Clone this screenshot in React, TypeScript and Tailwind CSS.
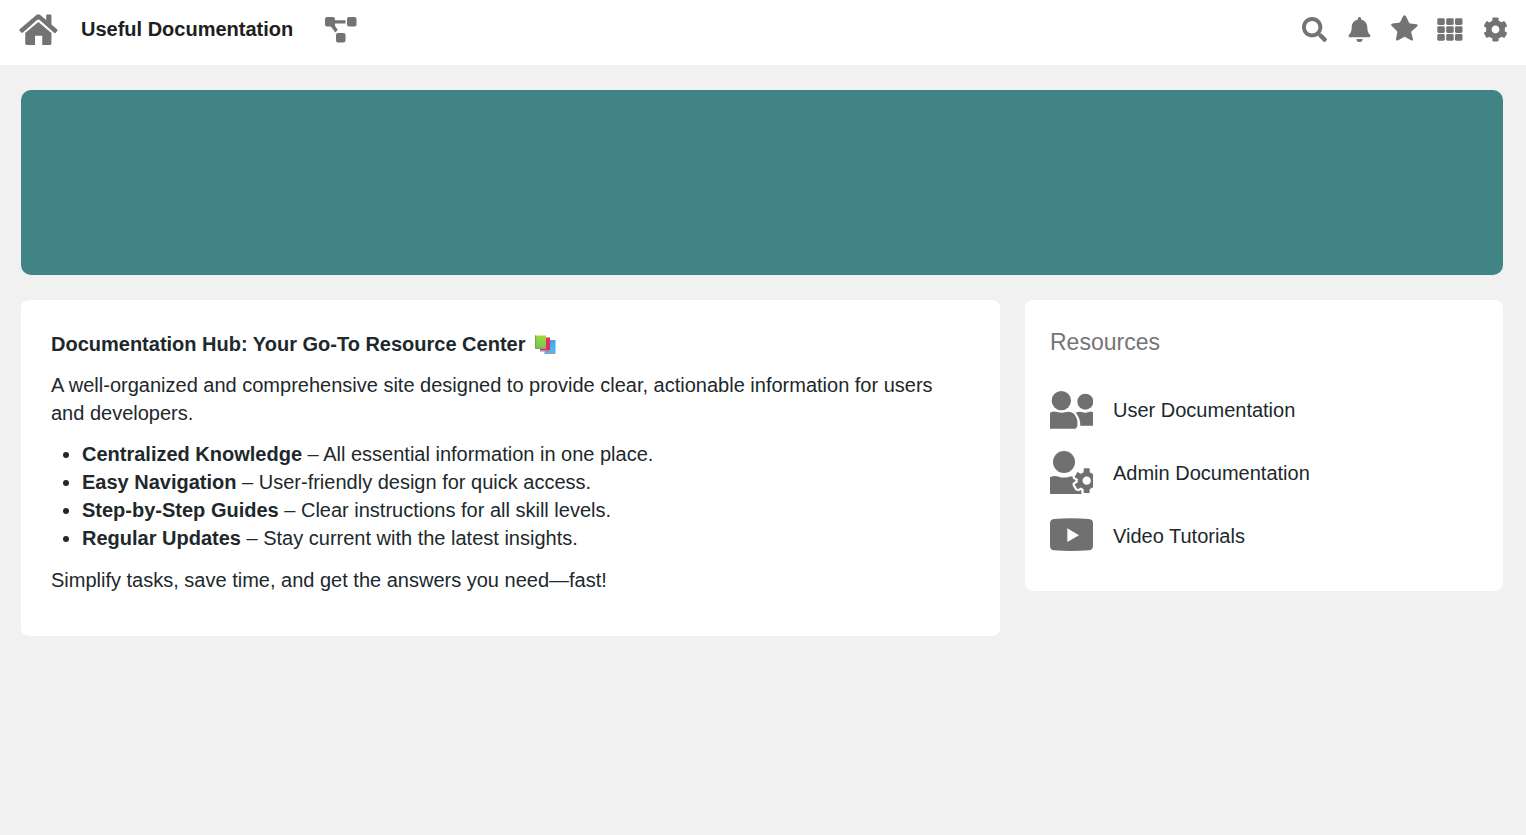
import type { ReactNode } from 'react';
import { FaBell, FaCog, FaSearch } from 'react-icons/fa';

function HomeIcon() {
  return (
    <svg viewBox="26 27 119 94" className="h-[31px] w-[39px]" fill="currentColor" aria-hidden="true">
      <path d="M45 85 85 51l40 34v32q0 4-4 4H97V93H75v28H49q-4 0-4-4Z" />
      <path d="m28 73 51-43q6-5 12 0l18 15V31q0-3 3-3h10q3 0 3 3v28l17 14q3 3 1 5l-5 6q-2 2-5 0L89 45q-4-3-8 0L38 83q-3 3-5 0l-5-5q-2-3 0-5Z" />
    </svg>
  );
}

function DiagramIcon() {
  return (
    <svg viewBox="0 0 32 26" className="h-[26px] w-8" fill="currentColor" aria-hidden="true">
      <rect x="0" y="0" width="10" height="9.5" rx="2" />
      <rect x="22" y="0" width="9.5" height="9.5" rx="2" />
      <rect x="11" y="16" width="9.5" height="9.5" rx="2" />
      <path d="M9 3.3h11.5v3.2H9zM5.5 9l3.5-2 3.7 6-2.4 2.4Z" />
    </svg>
  );
}

function StarIcon() {
  return (
    <svg viewBox="20 17 81 77" className="h-[26px] w-[27px]" fill="currentColor" aria-hidden="true">
      <path d="M56 20q4-5 9 0l9 19q1 3 4 3l19 2q5 2 2 6L82 65q-2 2-1 5l5 19q0 5-5 4L64 83q-3-2-6 0L40 93q-6 1-5-5l4-19q0-3-2-5L21 48q-2-4 3-6l19-2q3 0 5-3Z" />
    </svg>
  );
}

function GridIcon() {
  return (
    <svg viewBox="0 0 26 23" className="h-[23px] w-[26px]" fill="currentColor" aria-hidden="true">
      {[0.3, 8.2, 16].map((y) =>
        [0.3, 9.2, 18].map((x) => <rect key={`${x}-${y}`} x={x} y={y} width="7.5" height="6.7" rx="1.4" />),
      )}
    </svg>
  );
}

function BooksIcon() {
  return (
    <svg viewBox="0 0 21 20" className="ml-1 inline-block h-5 w-[21px] align-[-4px]" aria-hidden="true">
      <defs>
        <linearGradient id="book-green" x1="0" y1="0" x2="0" y2="1">
          <stop offset="0" stopColor="#a5d83c" />
          <stop offset="1" stopColor="#6cc558" />
        </linearGradient>
        <linearGradient id="book-blue" x1="0" y1="0" x2="0" y2="1">
          <stop offset="0" stopColor="#4a9ee8" />
          <stop offset="1" stopColor="#45c4f5" />
        </linearGradient>
      </defs>
      <path d="M11 5h9.5v12.5l-.8 1.5H9.5Z" fill="url(#book-blue)" />
      <path d="M9.5 17.4h11v.6l-.8 1H9.5Z" fill="#8f9dc4" />
      <path d="M5 2.5h10V15l-.8 1.2H5Z" fill="#e02e58" />
      <path d="M5 15h9.8l-.8 1.2H5Z" fill="#b987a4" />
      <path d="M0 .5h11v12l-1 1.5H0Z" fill="url(#book-green)" />
      <path d="M0 12.7h10.8l-.8 1.3H1L0 13Z" fill="#8b9c91" />
      <path d="M0 .5h1.2V13L0 12.5Z" fill="#72ac45" />
    </svg>
  );
}

function UsersIcon() {
  return (
    <svg viewBox="0 0 129 129" className="size-[43px] shrink-0" fill="currentColor" aria-hidden="true">
      <circle cx="34" cy="38" r="29" />
      <circle cx="106" cy="41" r="24" />
      <path d="M0 74q12-6 21-2 13 5 27 0 24-5 32 19 3 9 2 22-1 7-7 9H0Z" />
      <path d="M77 74q11-5 18-2 10 4 21 0 6-3 13 1v40H91q0-24-14-39Z" />
    </svg>
  );
}

function GearShape() {
  return (
    <>
      <circle cx="110" cy="89" r="27" />
      <rect x="101" y="52" width="18" height="74" rx="2" />
      <rect x="101" y="52" width="18" height="74" rx="2" transform="rotate(60 110 89)" />
      <rect x="101" y="52" width="18" height="74" rx="2" transform="rotate(120 110 89)" />
    </>
  );
}

function AdminIcon() {
  return (
    <svg viewBox="0 0 129 129" className="size-[43px] shrink-0" fill="currentColor" aria-hidden="true">
      <circle cx="42" cy="33" r="33" />
      <path d="M0 79q13-7 26-2 15 5 32 0 14-4 24 4l13 22v26H0Z" />
      <g fill="#fff" stroke="#fff" strokeWidth="13">
        <GearShape />
      </g>
      <path d="M74 118q12 0 19 11H74Z" />
      <GearShape />
      <circle cx="110" cy="89" r="12.5" fill="#fff" />
    </svg>
  );
}

function VideoIcon() {
  return (
    <svg viewBox="0 0 129 129" className="size-[43px] shrink-0" fill="currentColor" aria-hidden="true">
      <path
        fillRule="evenodd"
        d="M12 15q52-5 105 0 12 1 12 13v67q0 12-12 14-52 4-105 0-12-2-12-14V28q0-12 12-13Zm40 28v41l35-20.5Z"
      />
    </svg>
  );
}

const features = [
  { name: 'Centralized Knowledge', text: 'All essential information in one place.' },
  { name: 'Easy Navigation', text: 'User-friendly design for quick access.' },
  { name: 'Step-by-Step Guides', text: 'Clear instructions for all skill levels.' },
  { name: 'Regular Updates', text: 'Stay current with the latest insights.' },
];

const resources: { name: string; icon: ReactNode }[] = [
  { name: 'User Documentation', icon: <UsersIcon /> },
  { name: 'Admin Documentation', icon: <AdminIcon /> },
  { name: 'Video Tutorials', icon: <VideoIcon /> },
];

export default function App() {
  return (
    <div className="min-h-screen bg-[#f1f1f1] font-['Liberation_Sans',Arial,sans-serif] text-xl leading-7 text-[#20282c]">
      <header className="flex items-center justify-between bg-white pt-2 pr-[18px] pb-[14px] pl-[19px] text-[#737373]">
        <div className="flex h-[43px] items-center">
          <a href="#home" aria-label="Home">
            <HomeIcon />
          </a>
          <h1 className="ml-[23px] pb-0.5 font-bold text-[#202020]">Useful Documentation</h1>
          <button type="button" aria-label="Site map" className="ml-8">
            <DiagramIcon />
          </button>
        </div>
        <div className="flex items-center gap-[19px]">
          <button type="button" aria-label="Search" className="flex w-[26px] justify-center">
            <FaSearch className="size-[25px]" />
          </button>
          <button type="button" aria-label="Notifications" className="flex w-[26px] justify-center">
            <FaBell className="size-[25px]" />
          </button>
          <button type="button" aria-label="Favorites" className="flex w-[27px] justify-center pb-1">
            <StarIcon />
          </button>
          <button type="button" aria-label="Apps">
            <GridIcon />
          </button>
          <button type="button" aria-label="Settings" className="flex w-[26px] justify-center">
            <FaCog className="size-[25px]" />
          </button>
        </div>
      </header>

      <main className="flex flex-col gap-[25px] pt-[25px] pr-[23px] pb-6 pl-[21px]">
        <div className="h-[185px] rounded-[10px] bg-[#408486]" />

        <div className="grid grid-cols-[979fr_478fr] items-start gap-[25px]">
          <section className="rounded-lg bg-white px-[30px] pt-[30px] pb-[42px]">
            <h2 className="font-bold">
              Documentation Hub: Your Go-To Resource Center <BooksIcon />
            </h2>
            <p className="mt-[13px]">
              A well-organized and comprehensive site designed to provide clear, actionable information for users and
              developers.
            </p>
            <ul className="mt-[13px] list-disc pl-[31px]">
              {features.map((feature) => (
                <li key={feature.name}>
                  <strong>{feature.name}</strong> – {feature.text}
                </li>
              ))}
            </ul>
            <p className="mt-[14px]">Simplify tasks, save time, and get the answers you need—fast!</p>
          </section>

          <section className="rounded-lg bg-white px-[25px] pt-7 pb-[34px]">
            <h2 className="text-[23px] leading-7 text-[#757575]">Resources</h2>
            <ul className="mt-8 flex flex-col gap-5">
              {resources.map((resource) => (
                <li key={resource.name}>
                  <a href="#resource" className="flex items-center gap-5">
                    <span className="text-[#707070]">{resource.icon}</span>
                    {resource.name}
                  </a>
                </li>
              ))}
            </ul>
          </section>
        </div>
      </main>
    </div>
  );
}
